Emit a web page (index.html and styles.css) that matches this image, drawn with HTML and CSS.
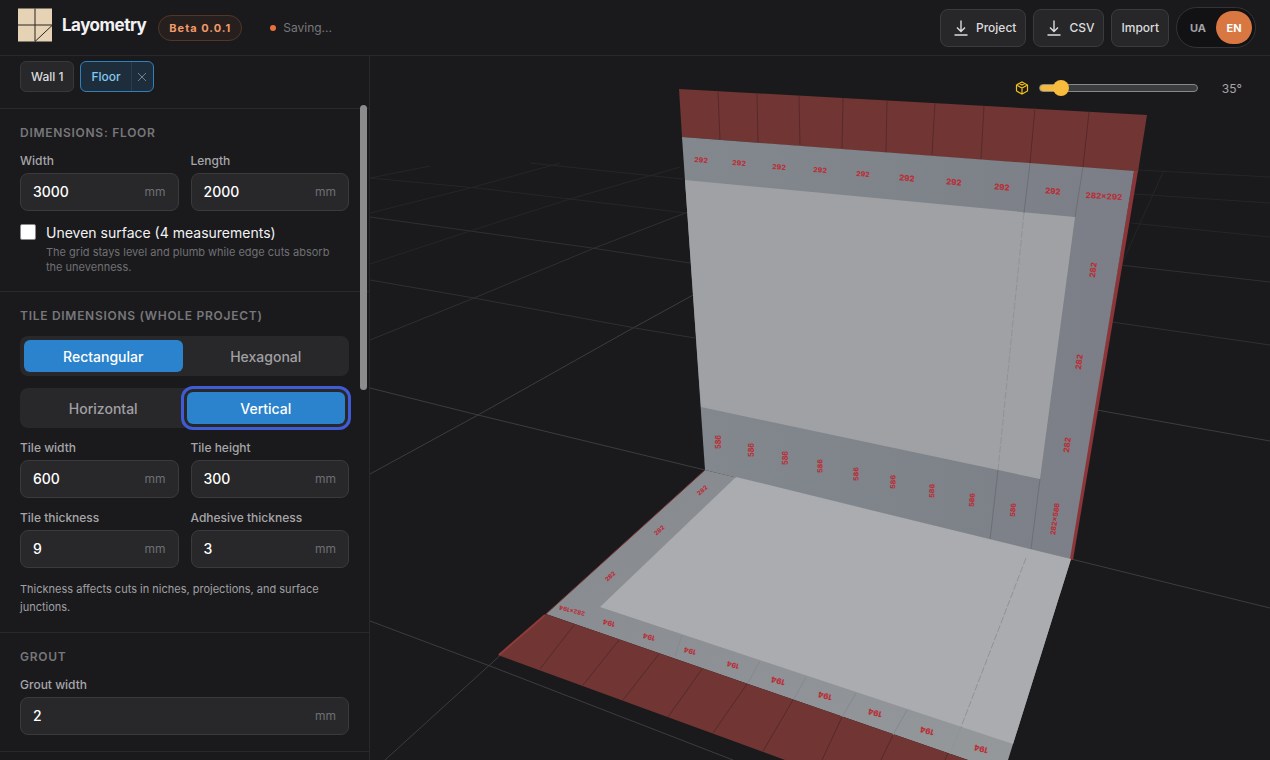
FILE: index.html
```html
<!DOCTYPE html>
<html lang="en">
<head>
<meta charset="utf-8">
<meta name="viewport" content="width=device-width, initial-scale=1">
<title>Layometry</title>
<link rel="stylesheet" href="styles.css">
</head>
<body>
<div class="app">
  <header class="topbar">
    <div class="brand">
      <svg class="logo" viewBox="0 0 34 33" aria-hidden="true">
        <rect width="34" height="33" fill="#e6d2b5"/>
        <path d="M17 0V33M0 16.500H34M17 33L34 17" fill="none" stroke="#2a2520" stroke-width="1"/>
      </svg>
      <h1 class="brand-name">Layometry</h1>
      <span class="badge">Beta 0.0.1</span>
    </div>
    <div class="status"><span class="status-dot"></span>Saving...</div>
    <div class="actions">
      <button class="btn" type="button">
        <svg class="btn-icon" viewBox="0 0 14 16" aria-hidden="true"><path d="M7 .5V11M3 7.500L7 11.500L11 7.500M.5 15H13.500"/></svg>
        Project
      </button>
      <button class="btn" type="button">
        <svg class="btn-icon" viewBox="0 0 14 16" aria-hidden="true"><path d="M7 .5V11M3 7.500L7 11.500L11 7.500M.5 15H13.500"/></svg>
        CSV
      </button>
      <button class="btn btn-plain" type="button">Import</button>
      <div class="lang">
        <button class="lang-btn" type="button">UA</button>
        <button class="lang-btn is-active" type="button">EN</button>
      </div>
    </div>
  </header>

  <aside class="sidebar">
    <nav class="tabs">
      <button class="tab" type="button">Wall 1</button>
      <div class="tab-group">
        <button class="tab-name" type="button">Floor</button>
        <button class="tab-close" type="button" aria-label="Remove floor">
          <svg viewBox="0 0 10 10" aria-hidden="true"><path d="M1 1L9 9M9 1L1 9"/></svg>
        </button>
      </div>
    </nav>
    <div class="panel">
      <section class="section">
        <h2 class="section-title">Dimensions: Floor</h2>
        <div class="fields">
          <div class="field">
            <label for="width">Width</label>
            <div class="control"><input id="width" type="text" value="3000"><span class="unit">mm</span></div>
          </div>
          <div class="field">
            <label for="length">Length</label>
            <div class="control"><input id="length" type="text" value="2000"><span class="unit">mm</span></div>
          </div>
        </div>
        <div class="check">
          <input id="uneven" type="checkbox">
          <div>
            <label for="uneven">Uneven surface (4 measurements)</label>
            <p class="check-note">The grid stays level and plumb while edge cuts absorb the unevenness.</p>
          </div>
        </div>
      </section>

      <section class="section">
        <h2 class="section-title">Tile dimensions (whole project)</h2>
        <div class="segment">
          <button class="is-active" type="button">Rectangular</button>
          <button type="button">Hexagonal</button>
        </div>
        <div class="segment">
          <button type="button">Horizontal</button>
          <button class="is-active has-ring" type="button">Vertical</button>
        </div>
        <div class="fields">
          <div class="field">
            <label for="tile-width">Tile width</label>
            <div class="control"><input id="tile-width" type="text" value="600"><span class="unit">mm</span></div>
          </div>
          <div class="field">
            <label for="tile-height">Tile height</label>
            <div class="control"><input id="tile-height" type="text" value="300"><span class="unit">mm</span></div>
          </div>
          <div class="field">
            <label for="tile-thickness">Tile thickness</label>
            <div class="control"><input id="tile-thickness" type="text" value="9"><span class="unit">mm</span></div>
          </div>
          <div class="field">
            <label for="adhesive">Adhesive thickness</label>
            <div class="control"><input id="adhesive" type="text" value="3"><span class="unit">mm</span></div>
          </div>
        </div>
        <p class="hint">Thickness affects cuts in niches, projections, and surface junctions.</p>
      </section>

      <section class="section">
        <h2 class="section-title">Grout</h2>
        <div class="field">
          <label for="grout">Grout width</label>
          <div class="control"><input id="grout" type="text" value="2"><span class="unit">mm</span></div>
        </div>
      </section>
    </div>
    <div class="scroll-thumb" aria-hidden="true"></div>
  </aside>

  <main class="viewport">
    <svg class="scene" viewBox="370 56 900 704" preserveAspectRatio="xMidYMid slice" role="img" aria-label="3D view of wall and floor layout">
      <defs>
        <linearGradient id="wall-band" x1="0" x2="1" y1="0" y2="0">
          <stop offset="0" stop-color="#83888e"/><stop offset="1" stop-color="#7b7e86"/>
        </linearGradient>
        <linearGradient id="floor-band" x1="0" x2="1" y1="0" y2="1">
          <stop offset="0" stop-color="#85888d"/><stop offset="1" stop-color="#96999c"/>
        </linearGradient>
      </defs>

      <!-- ground grid -->
      <g class="grid grid-near">
        <path d="M370 388L478 415L705 470M370 474L478 415L633 328L695 294M370 621L490 666L733 760M385 760L505 651"/>
        <path d="M1071 559L1270 608M1097 410L1270 441"/>
      </g>
      <g class="grid grid-mid">
        <path d="M370 280L474 298L635 328L695 338M370 217L470 231L592 248L690 263M370 340L474 298L592 249L688 212"/>
        <path d="M1112 322L1270 345M1120 265L1270 282"/>
      </g>
      <g class="grid grid-far">
        <path d="M370 178L477 188L570 199L686 213M530 163L683 179M370 264L470 231L570 199L680 167M370 213L470 188L560 163M370 178L430 166"/>
        <path d="M1131 223L1270 237M1134 194L1270 203M1138 170L1270 177M1120 268L1164 170"/>
      </g>

      <!-- wall -->
      <path fill="#713534" d="M679 89L1147 115L1138 172L682 137Z"/>
      <path fill="#8c3539" d="M1134 171L1138 171L1073 560L1069 559Z"/>
      <path fill="url(#wall-band)" d="M682 137L1134 171L1070 559L705 470Z"/>
      <path fill="#9fa1a4" d="M685 180L1075 217L1040 479L701 407Z"/>
      <path class="cut" d="M718 92L720 140M757 94L758 142M799 96L800 145M843 98L842 148M887 101L886 152M935 103L932 155M984 106L981 159M1035 108L1030 163M1089 112L1083 167"/>
      <path class="seam" d="M1030 163L1024 213M1083 167L1075 217M998 470L990 540M1040 479L1031 549"/>
      <path class="seam seam-dash" d="M1024 213L998 470"/>

      <!-- floor -->
      <path fill="url(#floor-band)" d="M705 470L1071 559L1008 760H968L546 614Z"/>
      <path fill="#aaacb0" d="M736 477L1071 559L1013 744L600 607Z"/>
      <path fill="#713534" d="M546 614L498 655L785 760H968Z"/>
      <path fill="none" stroke="#8f3b37" stroke-width="2" d="M545 615L499 655"/>
      <path fill="none" stroke="#7c3436" stroke-width="1" d="M705 470L546 614"/>
      <path class="cut" d="M574 625L540 669M619 640L583 685M659 654L623 700M702 669L668 717M747 684L713 733M793 700L763 751M842 717L822 760M893 735L881 760M948 753L945 760"/>
      <path class="seam seam-light" d="M842 717L856 693M893 735L907 710M675 656L682 635M748 683L760 661M794 699L806 677"/>
      <path class="seam seam-dash" d="M1026 558L961 727L950 754"/>

      <g class="marks marks-s">
        <text transform="translate(701 160) rotate(4)">292</text>
        <text transform="translate(739 163) rotate(4)">292</text>
        <text transform="translate(779 167) rotate(4)">292</text>
        <text transform="translate(820 170) rotate(4)">292</text>
        <text transform="translate(863 174) rotate(5)">292</text>
        <text transform="translate(718 442) rotate(-90)">586</text>
        <text transform="translate(751 450) rotate(-90)">586</text>
        <text transform="translate(785 458) rotate(-90)">586</text>
        <text transform="translate(820 466) rotate(-89)">586</text>
        <text transform="translate(856 474) rotate(-89)">586</text>
        <text transform="translate(893 482) rotate(-88)">586</text>
        <text transform="translate(932 491) rotate(-87)">586</text>
        <text transform="translate(972 500) rotate(-86)">586</text>
        <text transform="translate(1013 510) rotate(-85)">586</text>
        <text transform="translate(1055 519) rotate(-82)">282×586</text>
        <text transform="translate(609 623) rotate(195)">194</text>
        <text transform="translate(649 637) rotate(195)">194</text>
        <text transform="translate(690 651) rotate(195)">194</text>
        <text transform="translate(733 665) rotate(195)">194</text>
      </g>
      <g class="marks marks-xs">
        <text transform="translate(702 490) rotate(-42)">282</text>
        <text transform="translate(659 530) rotate(-43)">282</text>
        <text transform="translate(610 576) rotate(-44)">282</text>
        <text transform="translate(572 611) rotate(195)">282×194</text>
      </g>
      <g class="marks marks-m">
        <text transform="translate(907 178) rotate(5)">292</text>
        <text transform="translate(954 182) rotate(5)">292</text>
        <text transform="translate(1002 187) rotate(5)">292</text>
        <text transform="translate(1053 191) rotate(5)">292</text>
        <text transform="translate(1104 196) rotate(3)">282×292</text>
        <text transform="translate(1093 270) rotate(-82)">282</text>
        <text transform="translate(1079 362) rotate(-82)">282</text>
        <text transform="translate(1067 445) rotate(-82)">282</text>
        <text transform="translate(778 681) rotate(195)">194</text>
        <text transform="translate(825 696) rotate(195)">194</text>
        <text transform="translate(875 713) rotate(195)">194</text>
        <text transform="translate(927 731) rotate(195)">194</text>
        <text transform="translate(981 749) rotate(195)">194</text>
      </g>
    </svg>

    <div class="angle">
      <svg class="cube" viewBox="0 0 14 14" aria-hidden="true"><path d="M7 1L12.500 4V10L7 13L1.500 10V4ZM1.500 4L7 7L12.500 4M7 7V13M4.200 2.500L7 4L9.800 2.500"/></svg>
      <input type="range" min="30" max="85" value="35" aria-label="View angle">
      <output class="angle-value">35°</output>
    </div>
  </main>
</div>
</body>
</html>
```

FILE: styles.css
```css
* {
  box-sizing: border-box;
}

body {
  margin: 0;
  background: #1a1a1c;
  color: #f2f2f4;
  font-family: Inter, "Liberation Sans", sans-serif;
  font-size: 14px;
}

h1, h2, p {
  margin: 0;
}

button, input {
  font: inherit;
  color: inherit;
}

button {
  padding: 0;
  border: 0;
  background: none;
  cursor: pointer;
}

.app {
  display: grid;
  grid-template: 56px minmax(0, 1fr) / 370px minmax(0, 1fr);
  height: 100vh;
  overflow: hidden;
}

/* Top bar */
.topbar {
  grid-column: 1 / -1;
  display: flex;
  align-items: center;
  padding: 0 14px 0 18px;
  border-bottom: 1px solid #29292b;
}

.brand {
  display: flex;
  align-items: center;
  gap: 10px;
}

.logo {
  width: 34px;
  height: 34px;
  margin-bottom: 6px;
}

.brand-name {
  margin: 0 2px 6px 0;
  font-size: 17px;
  line-height: 24px;
  font-weight: 700;
  letter-spacing: -0.5px;
}

.badge {
  padding: 0 10px;
  border: 1px solid #523629;
  border-radius: 14px;
  background: #261f1d;
  color: #f0996a;
  font-size: 11px;
  line-height: 24px;
  font-weight: 700;
  letter-spacing: 1px;
}

.status {
  display: flex;
  align-items: center;
  gap: 7px;
  margin-left: 28px;
  color: #77777b;
  font-size: 12px;
}

.status-dot {
  width: 6px;
  height: 6px;
  border-radius: 50%;
  background: #e8703c;
}

.actions {
  display: flex;
  align-items: center;
  gap: 7px;
  margin-left: auto;
}

.btn {
  display: flex;
  align-items: center;
  gap: 8px;
  height: 38px;
  padding: 0 9px 0 13px;
  border: 1px solid #3b3b3e;
  border-radius: 8px;
  background: #272729;
  color: #dcdcdf;
  font-size: 12px;
  font-weight: 500;
}

.btn-plain {
  padding: 0 9px;
}

.btn-icon {
  width: 14px;
  height: 16px;
  fill: none;
  stroke: currentColor;
  stroke-width: 1.4;
}

.lang {
  display: flex;
  padding: 3px;
  border: 1px solid #343437;
  border-radius: 21px;
  background: #121214;
}

.lang-btn {
  width: 36px;
  height: 33px;
  border-radius: 17px;
  color: #a2a2a6;
  font-size: 11px;
  font-weight: 700;
}

.lang-btn.is-active {
  background: #d97742;
  color: #fff;
}

/* Sidebar */
.sidebar {
  position: relative;
  display: flex;
  flex-direction: column;
  min-height: 0;
  border-right: 1px solid #29292b;
}

.tabs {
  display: flex;
  gap: 6px;
  padding: 5px 20px 16px;
  border-bottom: 1px solid #29292b;
  font-size: 12px;
  font-weight: 500;
}

.tab {
  height: 31px;
  padding: 0 10px;
  border: 1px solid #38383b;
  border-radius: 6px;
  background: #28282a;
  color: #dcdcdf;
}

.tab-group {
  display: flex;
  height: 31px;
  overflow: hidden;
  border: 1px solid #3280bb;
  border-radius: 6px;
  background: #1d2d3b;
}

.tab-name {
  padding: 0 10px;
  color: #82c8f3;
}

.tab-close {
  display: grid;
  place-items: center;
  width: 22px;
  border-left: 1px solid #2b3d4d;
}

.tab-close svg {
  width: 10px;
  height: 10px;
  fill: none;
  stroke: #73818d;
}

.panel {
  flex: 1;
  min-height: 0;
  overflow: hidden;
}

.section {
  display: flex;
  flex-direction: column;
  gap: 12px;
  padding: 16px 20px;
  border-bottom: 1px solid #29292b;
}

.section-title {
  color: #77777b;
  font-size: 12px;
  line-height: 16px;
  font-weight: 600;
  letter-spacing: 0.06em;
  text-transform: uppercase;
}

.fields {
  display: grid;
  grid-template-columns: repeat(2, minmax(0, 1fr));
  gap: 12px;
}

.field {
  display: flex;
  flex-direction: column;
  gap: 4px;
  color: #a6a6aa;
  font-size: 12px;
  line-height: 16px;
  font-weight: 500;
}

.control {
  display: flex;
  align-items: center;
  height: 38px;
  padding: 0 12px;
  border: 1px solid #3a3a3d;
  border-radius: 8px;
  background: #28282a;
}

.control input {
  flex: 1;
  min-width: 0;
  padding: 0;
  border: 0;
  outline: 0;
  background: none;
  color: #fff;
  font-size: 14px;
  font-weight: 500;
}

.unit {
  color: #6f6f73;
  font-size: 12px;
  font-weight: 400;
}

.check {
  display: flex;
  gap: 10px;
  line-height: 20px;
}

.check input {
  flex: none;
  width: 16px;
  height: 16px;
  margin: 1px 0 0;
  border: 1px solid #8a8a8d;
  border-radius: 2px;
  background: #fff;
  appearance: none;
}

.check label {
  display: block;
}

.check-note {
  margin-top: 2px;
  padding-right: 12px;
  color: #707074;
  font-size: 11px;
  line-height: 15px;
}

.segment {
  display: grid;
  grid-template-columns: repeat(2, minmax(0, 1fr));
  gap: 4px;
  padding: 4px;
  border-radius: 8px;
  background: #28282a;
}

.segment button {
  height: 32px;
  border-radius: 6px;
  color: #a0a0a4;
  font-weight: 500;
}

.segment .is-active {
  background: #2a83cc;
  color: #fff;
}

.segment .has-ring {
  outline: 3px solid #3f5bd6;
  outline-offset: 3px;
}

.hint {
  color: #a0a0a4;
  font-size: 11px;
  line-height: 18px;
}

.scroll-thumb {
  position: absolute;
  top: 49px;
  right: 2px;
  width: 7px;
  height: 285px;
  border-radius: 4px;
  background: #8c8c8d;
}

/* 3D view */
.viewport {
  position: relative;
  min-height: 0;
}

.scene {
  display: block;
  width: 100%;
  height: 100%;
}

.grid {
  fill: none;
  stroke-width: 1;
}

.grid-near {
  stroke: #3d3d3f;
}

.grid-mid {
  stroke: #303032;
}

.grid-far {
  stroke: #242627;
}

.cut {
  fill: none;
  stroke: #552a2b;
  stroke-width: 1;
}

.seam {
  fill: none;
  stroke: #6c6f75;
  stroke-width: 1;
}

.seam-light {
  stroke: #85888c;
}

.seam-dash {
  stroke: #909296;
  stroke-dasharray: 7 2;
}

.marks {
  fill: #b92f38;
  font-family: Inter, "Liberation Sans", sans-serif;
  font-weight: 800;
  text-anchor: middle;
  dominant-baseline: central;
}

.marks-xs {
  font-size: 6px;
}

.marks-s {
  font-size: 7px;
}

.marks-m {
  font-size: 8px;
}

.angle {
  position: absolute;
  top: 20px;
  right: 28px;
  display: flex;
  align-items: center;
  height: 24px;
}

.cube {
  width: 14px;
  height: 14px;
  margin-right: 10px;
  fill: none;
  stroke: #f2c218;
  stroke-width: 1.2;
}

.angle input {
  width: 159px;
  height: 8px;
  margin: 0;
  border: 1px solid #868889;
  border-radius: 4px;
  background: linear-gradient(to right, #f6b93c 12%, #3b3d3e 12%);
  appearance: none;
}

.angle input::-webkit-slider-thumb {
  width: 16px;
  height: 16px;
  border-radius: 50%;
  background: #f8bb3d;
  appearance: none;
}

.angle-value {
  margin-left: 24px;
  color: #a6a6aa;
  font-size: 12px;
}
```
